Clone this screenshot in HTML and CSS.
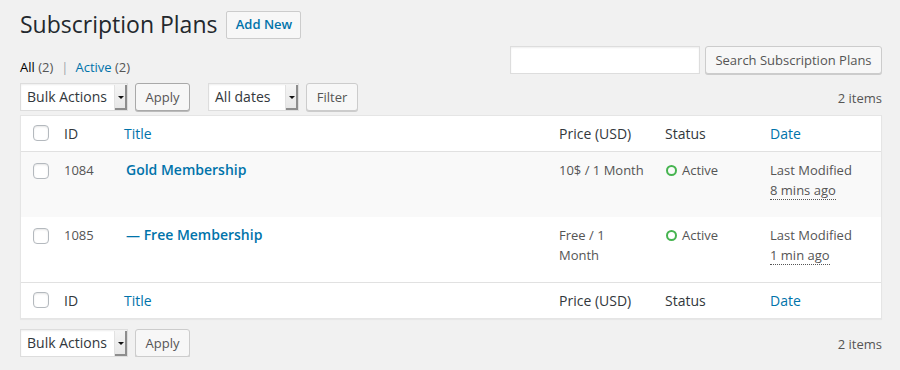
FILE: index.html
```html
<!DOCTYPE html>
<html lang="en">
<head>
<meta charset="utf-8">
<title>Subscription Plans</title>
<link rel="stylesheet" href="styles.css">
</head>
<body>
<div class="wrap">
  <div class="page-head">
    <h1 class="page-title">Subscription Plans</h1>
    <a class="btn add-new" href="#">Add New</a>
  </div>

  <div class="filter-row">
    <ul class="subsubsub">
      <li><a class="current" href="#">All <span class="count">(2)</span></a><span class="sep">|</span></li>
      <li><a href="#">Active <span class="count">(2)</span></a></li>
    </ul>
    <div class="search-box">
      <input class="search-input" type="search" value="">
      <button class="btn">Search Subscription Plans</button>
    </div>
  </div>

  <div class="tablenav tablenav-top">
    <div class="actions">
      <div class="fake-select select-bulk"><span class="sel-label">Bulk Actions</span><span class="sel-arrow"></span></div>
      <button class="btn btn-apply focused">Apply</button>
    </div>
    <div class="actions">
      <div class="fake-select select-dates"><span class="sel-label">All dates</span><span class="sel-arrow"></span></div>
      <button class="btn btn-filter">Filter</button>
    </div>
    <div class="num-items">2 items</div>
  </div>

  <table class="list-table">
    <colgroup>
      <col class="c-cb"><col class="c-id"><col class="c-title"><col class="c-price"><col class="c-status"><col class="c-date">
    </colgroup>
    <thead>
      <tr>
        <th class="check-col"><span class="cb"></span></th>
        <th>ID</th>
        <th><a href="#">Title</a></th>
        <th>Price (USD)</th>
        <th>Status</th>
        <th><a href="#">Date</a></th>
      </tr>
    </thead>
    <tbody>
      <tr class="alt">
        <td class="check-col"><span class="cb"></span></td>
        <td>1084</td>
        <td class="title-cell"><a class="row-title" href="#">Gold Membership</a></td>
        <td>10$ / 1 Month</td>
        <td><span class="status"><span class="ring"></span>Active</span></td>
        <td>Last Modified<br><abbr title="">8 mins ago</abbr></td>
      </tr>
      <tr>
        <td class="check-col"><span class="cb"></span></td>
        <td>1085</td>
        <td class="title-cell"><a class="row-title" href="#">— Free Membership</a></td>
        <td>Free / 1 Month</td>
        <td><span class="status"><span class="ring"></span>Active</span></td>
        <td>Last Modified<br><abbr title="">1 min ago</abbr></td>
      </tr>
    </tbody>
    <tfoot>
      <tr>
        <th class="check-col"><span class="cb"></span></th>
        <th>ID</th>
        <th><a href="#">Title</a></th>
        <th>Price (USD)</th>
        <th>Status</th>
        <th><a href="#">Date</a></th>
      </tr>
    </tfoot>
  </table>

  <div class="tablenav tablenav-bottom">
    <div class="actions">
      <div class="fake-select select-bulk"><span class="sel-label">Bulk Actions</span><span class="sel-arrow"></span></div>
      <button class="btn btn-apply">Apply</button>
    </div>
    <div class="num-items">2 items</div>
  </div>
</div>
</body>
</html>
```

FILE: styles.css
```css
* { box-sizing: border-box; }

html, body {
  margin: 0;
  padding: 0;
  background: #f1f1f1;
}

body {
  font-family: "Open Sans", "Noto Sans", sans-serif;
  font-size: 13px;
  color: #444;
  line-height: 1.4;
}

a { color: #0073aa; text-decoration: none; }

.wrap {
  padding: 10px 18px 0 20px;
}

.page-head {
  display: flex;
  align-items: center;
  height: 29px;
}

.page-title {
  margin: 0;
  font-size: 23px;
  font-weight: 400;
  color: #23282d;
  line-height: 29px;
}

.btn {
  display: inline-flex;
  align-items: center;
  justify-content: center;
  height: 28px;
  padding: 0 10px;
  font-family: inherit;
  font-size: 13px;
  color: #555;
  background: #f7f7f7;
  border: 1px solid #ccc;
  border-radius: 3px;
  box-shadow: 0 1px 0 #ccc;
  cursor: pointer;
}

.add-new {
  margin-left: 9px;
  height: 28px;
  width: 75px;
  padding: 0;
  color: #0073aa;
  font-weight: 600;
  border-radius: 2px;
  box-shadow: none;
  border-color: #ccc;
}

.filter-row {
  display: flex;
  justify-content: space-between;
  align-items: flex-start;
  margin-top: 7px;
  height: 28px;
}

.subsubsub {
  list-style: none;
  margin: 11px 0 0;
  padding: 0;
  display: flex;
  line-height: 20px;
  font-size: 13px;
}

.subsubsub .current { color: #000; }
.subsubsub .count { color: #555; }
.subsubsub .sep { color: #a0a5aa; margin: 0 7px 0 8px; }

.search-box {
  display: flex;
  gap: 5px;
}

.search-input {
  width: 190px;
  height: 28px;
  margin: 0;
  border: 1px solid #ddd;
  box-shadow: inset 0 1px 2px rgba(0,0,0,.07);
  background: #fff;
  font-family: inherit;
  font-size: 14px;
  padding: 3px 5px;
}

.search-box .btn {
  width: 177px;
  padding: 0;
}

.tablenav {
  display: flex;
  align-items: center;
  height: 28px;
}

.tablenav-top { margin-top: 9px; }
.tablenav-bottom { margin-top: 10px; }

.actions {
  display: flex;
  align-items: center;
  gap: 7px;
  margin-right: 18px;
}

.fake-select {
  display: flex;
  align-items: stretch;
  height: 28px;
  background: #fff;
  border: 1px solid #ddd;
  box-shadow: inset 0 1px 2px rgba(0,0,0,.07);
}

.select-bulk { width: 108px; }
.select-dates { width: 91px; }

.sel-label {
  flex: 1;
  display: flex;
  align-items: center;
  padding-left: 6px;
  font-size: 14px;
  color: #32373c;
  white-space: nowrap;
}

.sel-arrow {
  position: relative;
  width: 13px;
  margin: 1px 0 0;
  background: linear-gradient(#f4f4f4, #e6e6e6);
  border-left: 1px solid #e2e2e2;
  box-shadow: inset -2px -2px 0 #8d8d8d;
}

.sel-arrow::after {
  content: "";
  position: absolute;
  left: 3px;
  top: 11px;
  border-left: 3px solid transparent;
  border-right: 3px solid transparent;
  border-top: 3px solid #111;
}

.btn-apply { width: 55px; padding: 0; }
.btn-apply.focused { border-color: #a9a9a9; box-shadow: 0 1px 0 #bbb; }
.btn-filter { width: 52px; padding: 0; }

.num-items {
  margin-left: auto;
  font-size: 13px;
  color: #555;
  padding-top: 2px;
}

.list-table {
  margin-top: 4px;
  width: 100%;
  table-layout: fixed;
  border-collapse: separate;
  border-spacing: 0;
  background: #fff;
  border: 1px solid #e5e5e5;
  box-shadow: 0 1px 1px rgba(0,0,0,.04);
}

.c-cb { width: 33px; }
.c-id { width: 60px; }
.c-title { width: 435px; }
.c-price { width: 106px; }
.c-status { width: 105px; }
.c-date { width: 121px; }

.list-table th {
  text-align: left;
  font-weight: 400;
  font-size: 14px;
  color: #32373c;
  padding: 8px 10px;
  line-height: 19px;
  height: 35px;
}

.list-table thead th { border-bottom: 1px solid #e1e1e1; }
.list-table tfoot th { border-top: 1px solid #e1e1e1; }

.list-table td {
  vertical-align: top;
  padding: 8px 10px;
  line-height: 20px;
  height: 65px;
  font-size: 13px;
  color: #555;
}

.list-table tr.alt td { background: #f9f9f9; }

.list-table .check-col {
  vertical-align: top;
  padding: 9px 0 0 12px;
}

.list-table td.check-col { padding-top: 11px; }

.cb {
  display: block;
  width: 16px;
  height: 16px;
  border: 1px solid #b4b9be;
  border-radius: 4px;
  background: #fff;
  box-shadow: inset 0 1px 2px rgba(0,0,0,.1);
}

.title-cell { padding-left: 12px !important; }

.row-title {
  font-size: 14px;
  font-weight: 600;
  color: #0073aa;
}

.status {
  display: inline-flex;
  align-items: center;
}

.ring {
  display: inline-block;
  width: 11px;
  height: 11px;
  border: 2px solid #46b450;
  border-radius: 50%;
  margin: 0 5px 0 1px;
}

abbr {
  text-decoration: none;
  border-bottom: 1px dotted #555;
}
```
